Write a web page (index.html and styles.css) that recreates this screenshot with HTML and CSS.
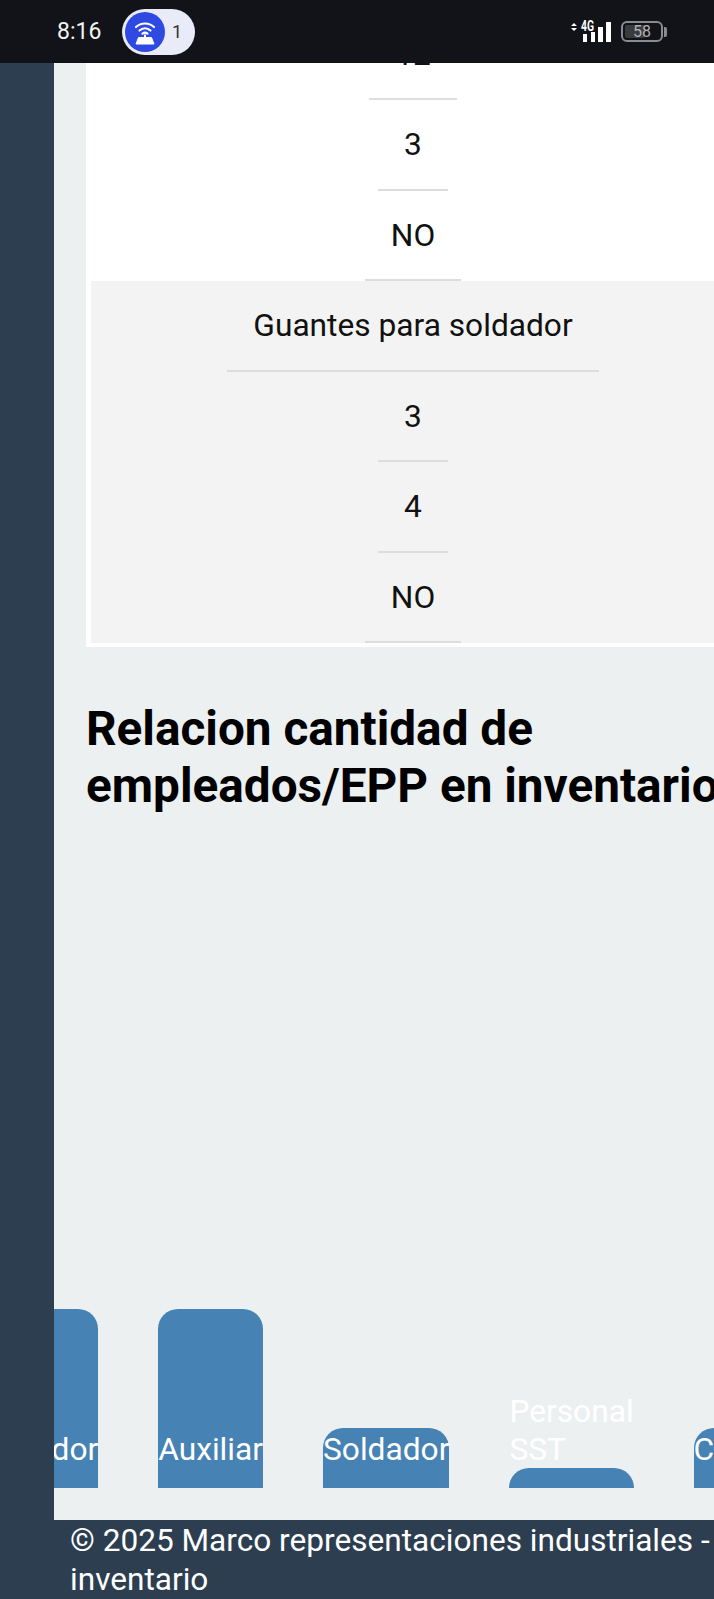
FILE: index.html
```html
<!DOCTYPE html>
<html lang="es">
<head>
    <meta charset="UTF-8">
    <meta name="viewport" content="width=device-width, initial-scale=1.0">
    <title>Inventario EPP</title>
    <link rel="stylesheet" href="styles.css">
</head>
<body>
    <div class="page">
        <div class="status-bar">
            <span class="status-time">8:16</span>
            <div class="status-pill">
                <span class="pill-circle">
                    <svg width="28" height="28" viewBox="0 0 28 28" fill="none">
                        <path d="M5 9C10 4.3 18 4.3 23 9" stroke="#fff" stroke-width="2.2" stroke-linecap="round"/>
                        <path d="M8.5 12.5C11.8 9.5 16.2 9.5 19.5 12.5" stroke="#fff" stroke-width="2.2" stroke-linecap="round"/>
                        <path d="M11.5 15.7C13 14.4 15 14.4 16.5 15.7" stroke="#fff" stroke-width="2.2" stroke-linecap="round"/>
                        <rect x="13" y="16.5" width="2" height="2.5" fill="#fff"/>
                        <path d="M7.5 19.5H20.5L23 26H5Z" fill="#fff" stroke="#fff" stroke-linejoin="round"/>
                    </svg>
                </span>
                <span class="pill-count">1</span>
            </div>
            <div class="status-right">
                <svg class="signal" width="42" height="24" viewBox="0 0 42 24">
                    <path d="M1 6L4 3L7 6ZM1 8H7L4 11Z" fill="#fff"/>
                    <rect x="13" y="14" width="4" height="8" fill="#fff"/>
                    <rect x="21" y="12" width="4" height="10" fill="#fff"/>
                    <rect x="28" y="7" width="5" height="15" fill="#fff"/>
                    <rect x="36" y="2" width="5" height="20" fill="#fff"/>
                    <text x="11" y="11" class="signal-text" textLength="13" lengthAdjust="spacingAndGlyphs">4G</text>
                </svg>
                <div class="battery">
                    <span class="battery-level"></span>
                    <span class="battery-text">58</span>
                </div>
                <span class="battery-nub"></span>
            </div>
        </div>

        <div class="layout">
            <div class="sidebar"></div>
            <div class="main">
                <div class="table-box">
                    <div class="row">
                        <div class="cell">12</div>
                        <div class="cell">3</div>
                        <div class="cell">NO</div>
                    </div>
                    <div class="row striped">
                        <div class="cell">Guantes para soldador</div>
                        <div class="cell">3</div>
                        <div class="cell">4</div>
                        <div class="cell">NO</div>
                    </div>
                </div>

                <h2 class="chart-title">Relacion cantidad de empleados/EPP en inventario</h2>

                <div class="chart">
                    <div class="bar" style="height: 179px"><span class="bar-label">Coordinador</span></div>
                    <div class="bar" style="height: 179px"><span class="bar-label">Auxiliar</span></div>
                    <div class="bar" style="height: 60px"><span class="bar-label">Soldador</span></div>
                    <div class="bar" style="height: 20px"><span class="bar-label">Personal SST</span></div>
                    <div class="bar" style="height: 60px"><span class="bar-label">Conductor</span></div>
                </div>
            </div>
        </div>

        <div class="footer">
            <p class="footer-text">© 2025 Marco representaciones industriales - inventario</p>
        </div>
    </div>
</body>
</html>
```
FILE: styles.css
```css
html, body {
    margin: 0;
    padding: 0;
    overflow: hidden;
}

body {
    font-family: Roboto, "Liberation Sans", sans-serif;
    color: #111;
}

.page {
    width: 714px;
    height: 1599px;
    display: flex;
    flex-direction: column;
    overflow: hidden;
}

/* Phone status bar */
.status-bar {
    flex: none;
    height: 63px;
    background-color: #111318;
    display: flex;
    align-items: center;
    padding-left: 57px;
    box-sizing: border-box;
}

.status-time {
    color: #f2f2f2;
    font-size: 23px;
    width: 65px;
}

.status-pill {
    width: 73px;
    height: 46px;
    background-color: #e9ebf8;
    border-radius: 23px;
    display: flex;
    align-items: center;
    padding-left: 3px;
    box-sizing: border-box;
}

.pill-circle {
    width: 40px;
    height: 40px;
    border-radius: 50%;
    background-color: #2f49e3;
    display: flex;
    align-items: center;
    justify-content: center;
}

.pill-count {
    margin-left: 7px;
    font-size: 18px;
    color: #333;
}

.status-right {
    margin-left: auto;
    margin-right: 47px;
    display: flex;
    align-items: center;
}

.signal {
    overflow: visible;
}

.signal-text {
    font-family: Roboto, sans-serif;
    font-size: 14px;
    font-weight: 700;
    fill: #fff;
}

.battery {
    position: relative;
    width: 42px;
    height: 21px;
    margin-left: 9px;
    border: 2px solid #8a8b8e;
    border-radius: 6px;
    box-sizing: border-box;
    padding: 2px;
}

.battery-level {
    display: block;
    width: 58%;
    height: 100%;
    background-color: #3a3b3e;
    border-radius: 2px;
}

.battery-text {
    position: absolute;
    left: 0;
    right: 0;
    top: 0;
    text-align: center;
    font-size: 16px;
    line-height: 17px;
    color: #b0b1b3;
}

.battery-nub {
    width: 3px;
    height: 10px;
    margin-left: 1px;
    background-color: #8a8b8e;
    border-radius: 0 2px 2px 0;
}

/* Page */
.layout {
    flex: 1;
    display: flex;
    min-height: 0;
}

.sidebar {
    flex: none;
    width: 54px;
    background-color: #2c3e50;
}

.main {
    flex: 1;
    min-width: 0;
    background-color: #ecf0f1;
    padding: 0 0 0 32px;
    overflow: hidden;
}

.table-box {
    width: 644px;
    margin-top: -53.5px;
    padding: 0 5px 4px;
    background-color: #fff;
}

.row {
    display: flex;
    flex-direction: column;
    align-items: center;
}

.striped {
    background-color: #f3f3f3;
}

.cell {
    padding: 27px 26px 25px;
    font-size: 31.7px;
    line-height: 36.5px;
    border-bottom: 2px solid #ddd;
    white-space: nowrap;
}

.chart-title {
    width: 654px;
    margin: 53.5px 0 0;
    font-size: 47.7px;
    line-height: 57px;
    font-weight: 700;
    color: #000;
}

.chart {
    display: flex;
    align-items: flex-end;
    gap: 60px;
    height: 673px;
    margin-left: -162px;
}

.bar {
    flex: none;
    width: min-content;
    background-color: #4682b4;
    border-radius: 20px 20px 0 0;
    display: flex;
    flex-direction: column;
    justify-content: flex-end;
    padding-bottom: 19px;
    box-sizing: border-box;
}

.bar-label {
    color: #fff;
    font-size: 31.7px;
    line-height: 38px;
}

.footer {
    flex: none;
    height: 79px;
    background-color: #2c3e50;
    padding: 2px 0 0 70px;
    box-sizing: border-box;
}

.footer-text {
    width: 700px;
    margin: 0;
    color: #fff;
    font-size: 31.6px;
    line-height: 38.5px;
}
```
